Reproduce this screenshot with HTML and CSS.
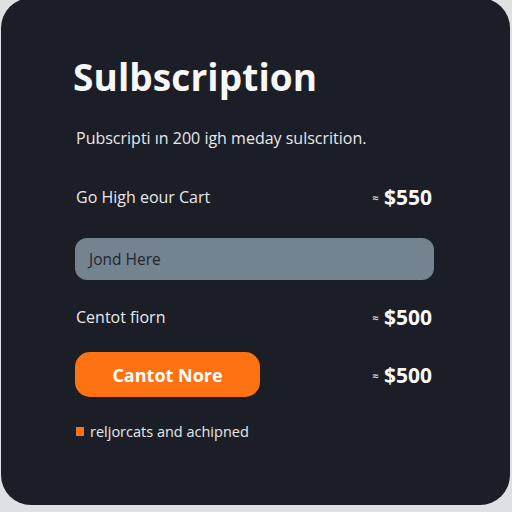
FILE: index.html
```html
<!DOCTYPE html>
<html lang="en">
<head>
  <meta charset="UTF-8">
  <title>Sulbscription</title>
  <meta name="viewport" content="width=device-width, initial-scale=1.0">
  <link rel="stylesheet" href="styles.css">
</head>
<body>

<div class="card">
  <h1>Sulbscription</h1>
  <p class="lead">Pubscripti ın 200 igh meday sulscrition.</p>

  <div class="row first">
    <span class="label">Go High eour Cart</span>
    <span class="price"><small>≈</small> $550</span>
  </div>

  <div class="field">Jond Here</div>

  <div class="row">
    <span class="label">Centot fiorn</span>
    <span class="price"><small>≈</small> $500</span>
  </div>

  <div class="row action">
    <button>Cantot Nore</button>
    <span class="price"><small>≈</small> $500</span>
  </div>

  <p class="note"><i></i>reljorcats and achipned</p>
</div>

</body>
</html>
```

FILE: styles.css
```css
body {
  margin: 0;
  background: #dfe0e3;
  font-family: "Open Sans", sans-serif;
  color: #e8e9ec;
}

.card {
  margin: -2px 2px 0 1px;
  height: 507px;
  box-sizing: border-box;
  padding: 53px 76px 0 74px;
  background: #1b1e26;
  border-radius: 30px;
}

h1 {
  margin: 0 0 0 -2px;
  font-size: 37px;
  font-weight: 700;
  color: #f7f7f8;
  letter-spacing: 0.1px;
}

.lead {
  margin: 25px 0 0 1px;
  font-size: 16px;
}

.row {
  display: flex;
  justify-content: space-between;
  align-items: center;
  margin-top: 23px;
}

.row.first {
  margin-top: 34px;
}

.label {
  font-size: 16px;
  padding-left: 1px;
}

.price {
  font-size: 21px;
  font-weight: 700;
  color: #f7f7f8;
  margin-right: 2px;
}

.price small {
  font-size: 11px;
  color: #c7c9cf;
  vertical-align: 3px;
}

.field {
  margin-top: 27px;
  height: 42px;
  display: flex;
  align-items: center;
  padding-left: 14px;
  background: #748390;
  border-radius: 12px;
  font-size: 15.5px;
  color: #1f2630;
}

.row.action {
  margin-top: 21px;
}

button {
  width: 185px;
  height: 45px;
  background: #ff7212;
  color: #fff;
  border: none;
  border-radius: 15px;
  font-family: "Open Sans", sans-serif;
  font-size: 18px;
  font-weight: 700;
}

.note {
  display: flex;
  align-items: center;
  margin: 25px 0 0 1px;
  font-size: 14.5px;
}

.note i {
  width: 8px;
  height: 9px;
  background: #ff7212;
  margin-right: 6px;
}
```
